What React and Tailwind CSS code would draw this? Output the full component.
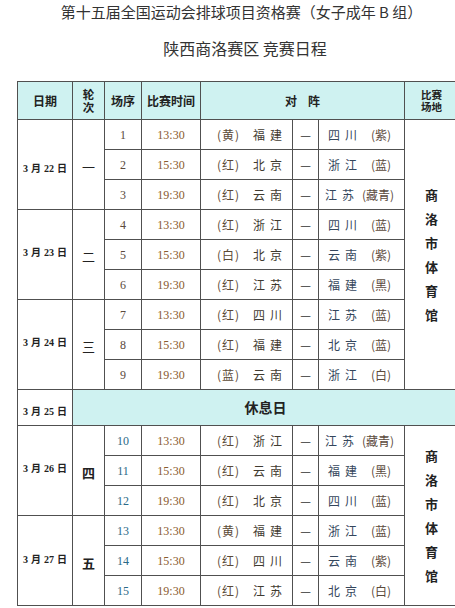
import React from "react";

const sans = { fontFamily: '"Noto Sans CJK SC", "Noto Sans", sans-serif' };

const groups = [
  {
    date: "22",
    round: "一",
    roundBold: false,
    off: "",
    rows: [
      ["1", "13:30", "黄", "福建", "四川", "紫"],
      ["2", "15:30", "红", "北京", "浙江", "蓝"],
      ["3", "19:30", "红", "云南", "江苏", "藏青"],
    ],
  },
  {
    date: "23",
    round: "二",
    roundBold: false,
    off: "pb-[12px]",
    rows: [
      ["4", "13:30", "红", "浙江", "四川", "蓝"],
      ["5", "15:30", "白", "北京", "云南", "紫"],
      ["6", "19:30", "红", "江苏", "福建", "黑"],
    ],
  },
  {
    date: "24",
    round: "三",
    roundBold: false,
    off: "pb-[12px]",
    rows: [
      ["7", "13:30", "红", "四川", "江苏", "蓝"],
      ["8", "15:30", "红", "福建", "北京", "蓝"],
      ["9", "19:30", "蓝", "云南", "浙江", "白"],
    ],
  },
  {
    date: "26",
    round: "四",
    roundBold: true,
    off: "pb-[12px]",
    rows: [
      ["10", "13:30", "红", "浙江", "江苏", "藏青"],
      ["11", "15:30", "红", "云南", "福建", "黑"],
      ["12", "19:30", "红", "北京", "四川", "蓝"],
    ],
  },
  {
    date: "27",
    round: "五",
    roundBold: true,
    off: "pb-[10px]",
    rows: [
      ["13", "13:30", "黄", "福建", "浙江", "蓝"],
      ["14", "15:30", "红", "四川", "云南", "紫"],
      ["15", "19:30", "红", "江苏", "北京", "白"],
    ],
  },
];

const cell = "border border-[#505050] p-0";

function DateText({ d }) {
  return (
    <span className="text-[10px] font-bold text-[#222]" style={sans}>
      <span style={{ fontFamily: '"Liberation Serif", serif' }}>3</span>
      <span className="mx-[3px]">月</span>
      <span style={{ fontFamily: '"Liberation Serif", serif' }}>{d}</span>
      <span className="ml-[3px]">日</span>
    </span>
  );
}

function Venue() {
  return (
    <div className="flex flex-col items-center text-[13px] font-bold leading-[24px] text-[#222]" style={sans}>
      {"商洛市体育馆".split("").map((c, i) => (
        <span key={i}>{c}</span>
      ))}
    </div>
  );
}

function MatchRow({ r, first, group, venueRows }) {
  const [no, time, lc, lt, rt, rc] = r;
  const big = Number(no) >= 10;
  const longR = rc.length > 1;
  return (
    <tr className="h-[30px]">
      {first && (
        <td rowSpan={3} className={`${cell} text-center align-middle ${group.off}`}>
          <DateText d={group.date} />
        </td>
      )}
      {first && (
        <td rowSpan={3} className={`${cell} text-center align-middle`}>
          <span className={`text-[13px] text-[#222] ${group.roundBold ? "font-bold" : ""}`} style={sans}>
            {group.round}
          </span>
        </td>
      )}
      <td
        className={`${cell} text-center text-[12px] ${big ? "text-[#2b6a88]" : "text-[#5a4a3c]"}`}
        style={{ fontFamily: '"Liberation Serif", serif' }}
      >
        {no}
      </td>
      <td className={`${cell} text-center text-[12px] text-[#8a5a2e]`} style={{ fontFamily: '"Liberation Serif", serif' }}>
        {time}
      </td>
      <td className={`${cell}`}>
        <div className="flex items-center justify-between pl-[16px] pr-[10px] text-[12px]" style={sans}>
          <span className="text-[#5b4a36] tracking-[1px]">({lc})</span>
          <span className="text-[#3f3a30] flex gap-[5px]">
            {lt.split("").map((c, i) => (
              <span key={i}>{c}</span>
            ))}
          </span>
        </div>
      </td>
      <td className={`${cell} text-center text-[12px] text-[#333]`} style={sans}>
        —
      </td>
      <td className={`${cell}`}>
        <div
          className={`flex items-center justify-between text-[12px] ${longR ? "pl-[6px] pr-[10px]" : "pl-[9px] pr-[13px]"}`}
          style={sans}
        >
          <span className="text-[#34465c] flex gap-[5px]">
            {rt.split("").map((c, i) => (
              <span key={i}>{c}</span>
            ))}
          </span>
          <span className="text-[#5b4a3c]">({rc})</span>
        </div>
      </td>
      {venueRows ? (
        <td rowSpan={venueRows} className={`${cell} text-center align-middle`}>
          <Venue />
        </td>
      ) : null}
    </tr>
  );
}

export default function App() {
  return (
    <div className="w-[455px] h-[608px] overflow-hidden bg-white" style={sans}>
      <div className="pt-[1px] text-center text-[15px] leading-[22px] text-[#333] pl-[28px]">
        第十五届全国运动会排球项目资格赛（女子成年 B 组）
      </div>
      <div className="text-center text-[16px] leading-[22px] text-[#333] mt-[14px] pl-[35px]">
        陕西商洛赛区 竞赛日程
      </div>
      <div className="mt-[22px] pl-[17px]">
        <table className="border-collapse table-fixed w-[441px]">
          <colgroup>
            <col className="w-[55px]" />
            <col className="w-[32px]" />
            <col className="w-[37px]" />
            <col className="w-[59px]" />
            <col className="w-[92px]" />
            <col className="w-[26px]" />
            <col className="w-[86px]" />
            <col className="w-[54px]" />
          </colgroup>
          <tbody>
            <tr className="h-[38px] bg-[#cff2f1]">
              <td className={`${cell} text-center text-[12px] font-bold text-[#222]`}>日期</td>
              <td className={`${cell} text-center text-[11.5px] font-bold text-[#222]`}>
                <div className="flex flex-col items-center leading-[12.5px]">
                  <span>轮</span>
                  <span>次</span>
                </div>
              </td>
              <td className={`${cell} text-center text-[12px] font-bold text-[#222]`}>场序</td>
              <td className={`${cell} text-center text-[12px] font-bold text-[#222]`}>比赛时间</td>
              <td colSpan={3} className={`${cell} text-center text-[12px] font-bold text-[#222]`}>
                <span className="inline-flex gap-[11px]">
                  <span>对</span>
                  <span>阵</span>
                </span>
              </td>
              <td className={`${cell} text-center text-[10.5px] font-bold text-[#222]`}>
                <div className="flex flex-col items-center leading-[11.5px]">
                  <span>比赛</span>
                  <span>场地</span>
                </div>
              </td>
            </tr>
            {groups.slice(0, 3).map((g, gi) =>
              g.rows.map((r, ri) => (
                <MatchRow key={r[0]} r={r} first={ri === 0} group={g} venueRows={gi === 0 && ri === 0 ? 9 : 0} />
              ))
            )}
            <tr className="h-[36px]">
              <td className={`${cell} text-center align-middle bg-white`}>
                <DateText d="25" />
              </td>
              <td colSpan={7} className={`${cell} bg-[#cff2f1] text-center text-[14px] font-bold text-[#222]`}>
                休息日
              </td>
            </tr>
            {groups.slice(3).map((g, gi) =>
              g.rows.map((r, ri) => (
                <MatchRow key={r[0]} r={r} first={ri === 0} group={g} venueRows={gi === 0 && ri === 0 ? 6 : 0} />
              ))
            )}
          </tbody>
        </table>
      </div>
    </div>
  );
}
